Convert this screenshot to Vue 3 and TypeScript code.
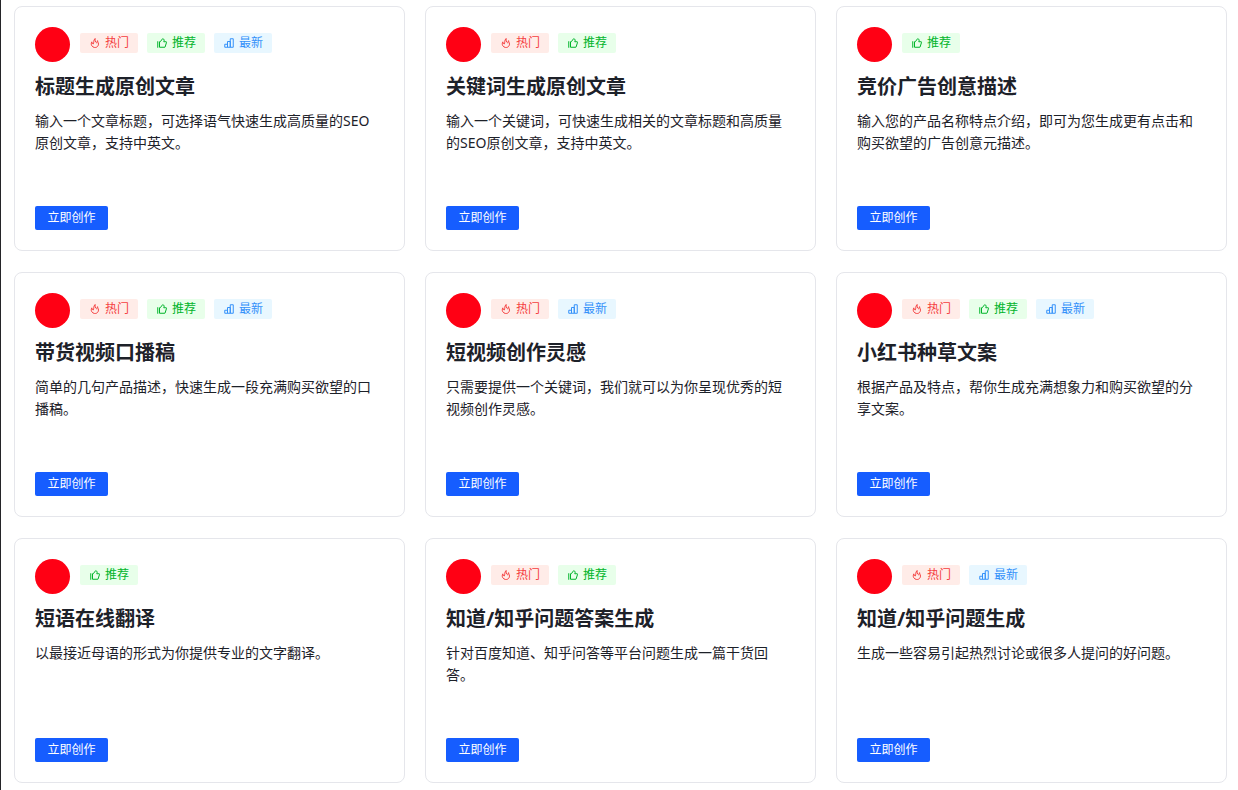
<script setup lang="ts">
type TagKind = 'hot' | 'recommend' | 'latest'

interface Tool {
  title: string
  description: string
  tags: TagKind[]
}

const tagLabels: Record<TagKind, string> = {
  hot: '热门',
  recommend: '推荐',
  latest: '最新',
}

const tagIcons: Record<TagKind, string> = {
  hot: 'M17.577 27.477C20.022 22.579 17.041 12.98 24.546 6c0 0-1.156 15.55 5.36 17.181 2.145.537 2.68-5.369 4.289-8.59 0 0 .536 4.832 2.68 8.59 3.217 7.517-1 14.117-5.896 17.182-4.289 2.684-14.587 2.807-19.835-5.37-4.824-7.516 0-15.57 0-15.57s4.289 12.35 6.433 8.054Z',
  recommend:
    'M7 17v26m35.17-21.394-5.948 18.697a1 1 0 0 1-.953.697H14V19h3l9.403-12.223a1 1 0 0 1 1.386-.196l2.535 1.87a6 6 0 0 1 2.044 6.974L31 19h9.265a2 2 0 0 1 1.906 2.606Z',
  latest: 'M41 7H29v34h12V7ZM29 18H18v23h11V18ZM18 29H7v12h11V29Z',
}

const tools: Tool[] = [
  {
    title: '标题生成原创文章',
    description: '输入一个文章标题，可选择语气快速生成高质量的SEO原创文章，支持中英文。',
    tags: ['hot', 'recommend', 'latest'],
  },
  {
    title: '关键词生成原创文章',
    description: '输入一个关键词，可快速生成相关的文章标题和高质量的SEO原创文章，支持中英文。',
    tags: ['hot', 'recommend'],
  },
  {
    title: '竞价广告创意描述',
    description: '输入您的产品名称特点介绍，即可为您生成更有点击和购买欲望的广告创意元描述。',
    tags: ['recommend'],
  },
  {
    title: '带货视频口播稿',
    description: '简单的几句产品描述，快速生成一段充满购买欲望的口播稿。',
    tags: ['hot', 'recommend', 'latest'],
  },
  {
    title: '短视频创作灵感',
    description: '只需要提供一个关键词，我们就可以为你呈现优秀的短视频创作灵感。',
    tags: ['hot', 'latest'],
  },
  {
    title: '小红书种草文案',
    description: '根据产品及特点，帮你生成充满想象力和购买欲望的分享文案。',
    tags: ['hot', 'recommend', 'latest'],
  },
  {
    title: '短语在线翻译',
    description: '以最接近母语的形式为你提供专业的文字翻译。',
    tags: ['recommend'],
  },
  {
    title: '知道/知乎问题答案生成',
    description: '针对百度知道、知乎问答等平台问题生成一篇干货回答。',
    tags: ['hot', 'recommend'],
  },
  {
    title: '知道/知乎问题生成',
    description: '生成一些容易引起热烈讨论或很多人提问的好问题。',
    tags: ['hot', 'latest'],
  },
]
</script>

<template>
  <main class="tools" lang="zh-CN">
    <article v-for="tool in tools" :key="tool.title" class="card">
      <header class="card-head">
        <span class="avatar" aria-hidden="true"></span>
        <ul class="tags">
          <li v-for="tag in tool.tags" :key="tag" class="tag" :class="tag">
            <svg class="tag-icon" viewBox="0 0 48 48" aria-hidden="true">
              <path :d="tagIcons[tag]" />
            </svg>
            <span>{{ tagLabels[tag] }}</span>
          </li>
        </ul>
      </header>
      <h2 class="title">{{ tool.title }}</h2>
      <p class="description">{{ tool.description }}</p>
      <button type="button" class="create">立即创作</button>
    </article>
  </main>
</template>

<style>
body {
  margin: 0;
  background: #fff;
}
</style>

<style scoped>
.tools {
  display: grid;
  grid-template-columns: repeat(3, minmax(0, 1fr));
  gap: 21px 20px;
  box-sizing: border-box;
  min-height: 100vh;
  padding: 6px 11px 7px 13px;
  border-left: 1px solid #242428;
  font-family: 'Noto Sans', 'Noto Sans CJK SC', sans-serif;
  color: #1d2129;
}

.card {
  display: flex;
  flex-direction: column;
  align-items: flex-start;
  box-sizing: border-box;
  min-height: 245px;
  padding: 20px;
  border: 1px solid #e5e6eb;
  border-radius: 8px;
}

.card-head {
  display: flex;
  align-items: center;
  gap: 10px;
}

.avatar {
  width: 35px;
  height: 35px;
  border-radius: 50%;
  background: #ff0014;
}

.tags {
  display: flex;
  gap: 9px;
  margin: 0;
  padding: 0 0 3px;
  list-style: none;
}

.tag {
  display: flex;
  align-items: center;
  gap: 4px;
  box-sizing: border-box;
  height: 20px;
  padding: 0 9px;
  border-radius: 2px;
  font-size: 12px;
  line-height: 20px;
}

.tag-icon {
  width: 12px;
  height: 12px;
  fill: none;
  stroke: currentColor;
  stroke-width: 4;
}

.hot {
  color: #f53f3f;
  background: #ffece8;
}

.recommend {
  color: #00b42a;
  background: #e8ffea;
}

.latest {
  color: #3491fa;
  background: #e8f7ff;
}

.title {
  margin: 11px 0 0;
  font-size: 20px;
  font-weight: 700;
  line-height: 28px;
}

.description {
  margin: 9px 0 0;
  padding-right: 6px;
  font-size: 14px;
  line-height: 22px;
}

.create {
  min-width: 73px;
  height: 24px;
  margin: auto 0 0;
  padding: 0 12px;
  border: 0;
  border-radius: 2px;
  background: #165dff;
  color: #fff;
  font-family: inherit;
  font-size: 12px;
  line-height: 24px;
  cursor: pointer;
}
</style>
